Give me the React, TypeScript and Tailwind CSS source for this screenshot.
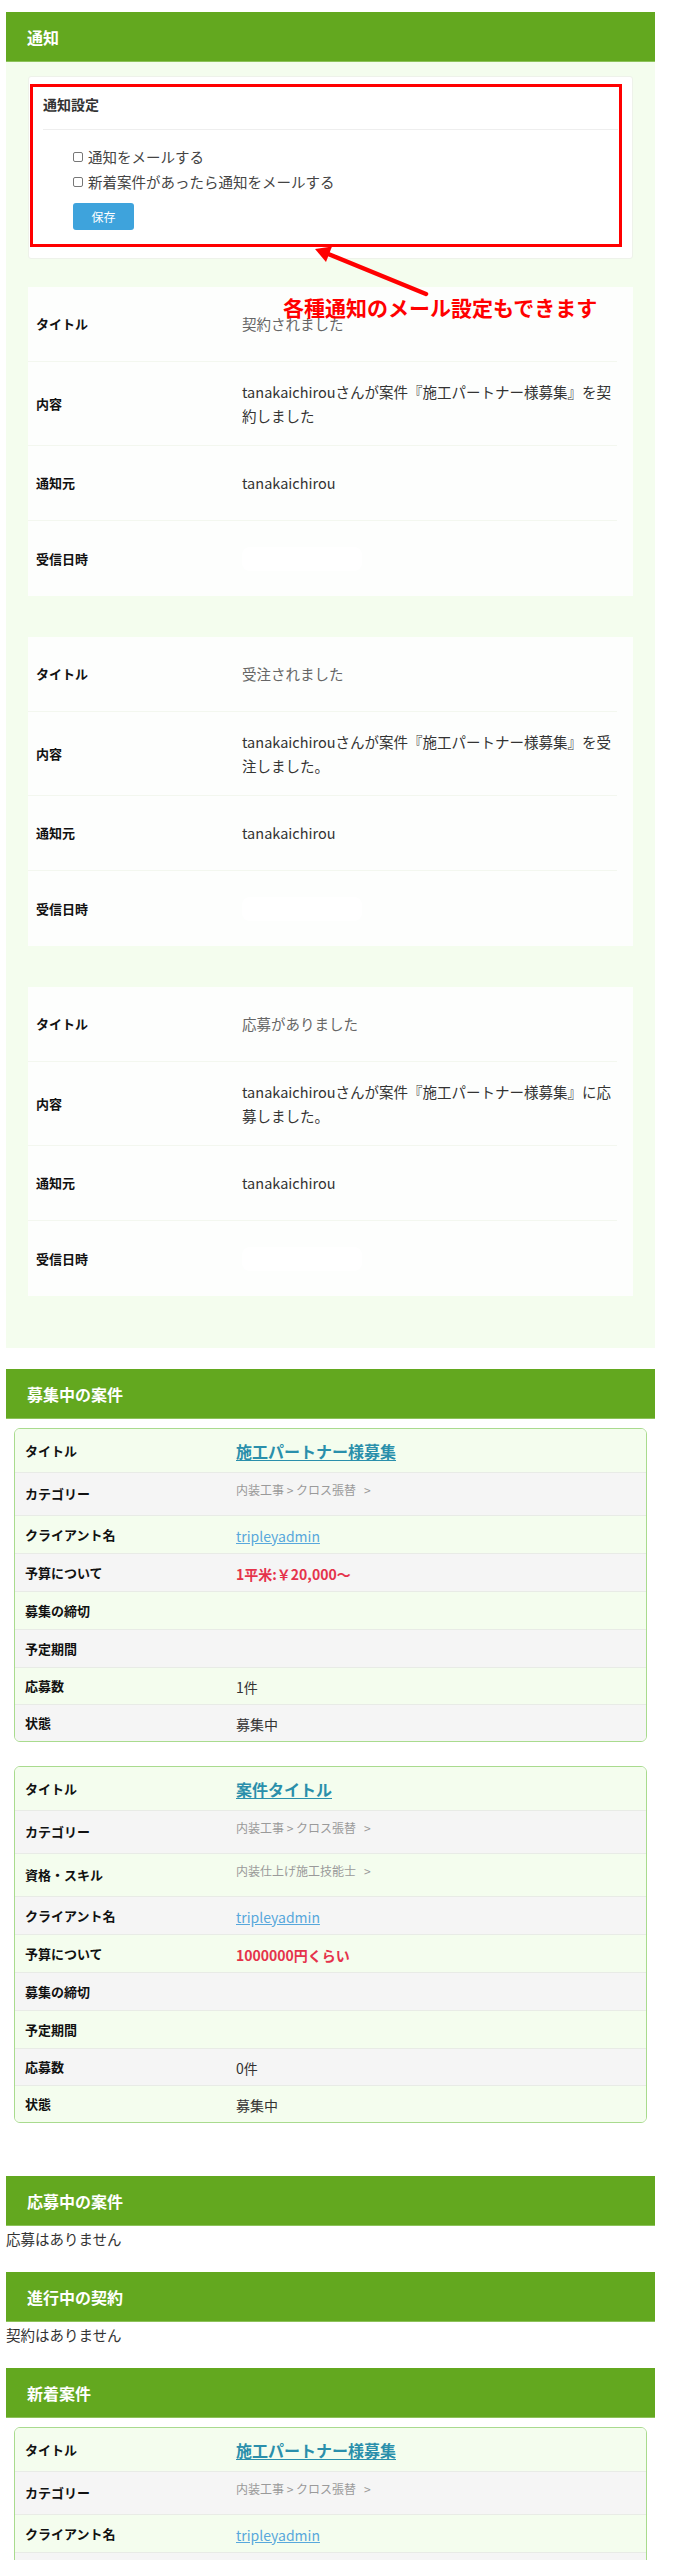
import React from 'react';

const font = { fontFamily: '"Noto Sans CJK JP", "Noto Sans", sans-serif' };

type Notice = { title: string; body: string; from: string };

const notices: Notice[] = [
    { title: '契約されました', body: 'tanakaichirouさんが案件『施工パートナー様募集』を契約しました', from: 'tanakaichirou' },
    { title: '受注されました', body: 'tanakaichirouさんが案件『施工パートナー様募集』を受注しました。', from: 'tanakaichirou' },
    { title: '応募がありました', body: 'tanakaichirouさんが案件『施工パートナー様募集』に応募しました。', from: 'tanakaichirou' },
];

type Job = {
    title: string;
    skill?: string;
    budget: string;
    count: string;
};

const openJobs: Job[] = [
    { title: '施工パートナー様募集', budget: '1平米:￥20,000〜', count: '1件' },
    { title: '案件タイトル', skill: '内装仕上げ施工技能士', budget: '1000000円くらい', count: '0件' },
];

function SectionHeader({ children }: { children: React.ReactNode }) {
    return (
        <div className="h-[50px] bg-[#63a81f] flex items-center px-[21px] text-white font-bold text-[16px] border-b border-[#8cc25a]">
            {children}
        </div>
    );
}

function NoticeCard({ n }: { n: Notice }) {
    const label = 'w-[214px] shrink-0 pl-[8px] text-[13px] font-bold text-[#111]';
    return (
        <div className="bg-[#fdfefd] pr-[16px]">
            <div className="h-[75px] flex items-center border-b border-[#f3f7ef]">
                <div className={label}>タイトル</div>
                <div className="text-[14.5px] text-[#666]">{n.title}</div>
            </div>
            <div className="h-[84px] flex items-center border-b border-[#f3f7ef]">
                <div className={label}>内容</div>
                <div className="flex-1 text-[14.5px] leading-[24px] text-[#333]">{n.body}</div>
            </div>
            <div className="h-[75px] flex items-center border-b border-[#f3f7ef]">
                <div className={label}>通知元</div>
                <div className="text-[14.5px] text-[#333]">{n.from}</div>
            </div>
            <div className="h-[75px] flex items-center">
                <div className={label}>受信日時</div>
                <div className="w-[120px] h-[24px] rounded-[8px] bg-white" />
            </div>
        </div>
    );
}

function JobRow({ label, children, green, h, last }: { label: string; children?: React.ReactNode; green: boolean; h: string; last?: boolean }) {
    return (
        <div className={`${h} flex items-center ${green ? 'bg-[#f4fdee]' : 'bg-[#f5f5f5]'} ${last ? '' : 'border-b border-[#e8ebe6]'}`}>
            <div className="w-[221px] shrink-0 pl-[10px] text-[13px] font-bold text-[#111]">{label}</div>
            <div className="flex-1">{children}</div>
        </div>
    );
}

function Crumb({ items }: { items: string[] }) {
    return (
        <div className="-mt-[8px] text-[12px] text-[#9a9a9a]">
            {items.join(' > ')}
            <span className="ml-[8px]">&gt;</span>
        </div>
    );
}

function JobCard({ job }: { job: Job }) {
    const rows: { label: string; h: string; node?: React.ReactNode }[] = [
        {
            label: 'タイトル',
            h: 'h-[44px]',
            node: <span className="text-[16px] font-bold text-[#2a8fab] underline underline-offset-2">{job.title}</span>,
        },
        { label: 'カテゴリー', h: 'h-[43px]', node: <Crumb items={['内装工事', 'クロス張替']} /> },
    ];
    if (job.skill) rows.push({ label: '資格・スキル', h: 'h-[43px]', node: <div className="-mt-[8px] text-[12px] text-[#9a9a9a]">{job.skill}<span className="ml-[8px]">&gt;</span></div> });
    rows.push(
        { label: 'クライアント名', h: 'h-[38px]', node: <span className="text-[14px] text-[#58a8dc] underline">tripleyadmin</span> },
        { label: '予算について', h: 'h-[38px]', node: <span className="text-[14px] font-bold text-[#e5334b]">{job.budget}</span> },
        { label: '募集の締切', h: 'h-[38px]' },
        { label: '予定期間', h: 'h-[38px]' },
        { label: '応募数', h: 'h-[37px]', node: <span className="text-[14px] text-[#333]">{job.count}</span> },
        { label: '状態', h: 'h-[36px]', node: <span className="text-[14px] text-[#333]">募集中</span> },
    );
    return (
        <div className="mx-[8px] border border-[#a9db8e] rounded-[6px] overflow-hidden">
            {rows.map((r, i) => (
                <JobRow key={r.label} label={r.label} green={i % 2 === 0} h={r.h} last={i === rows.length - 1}>
                    {r.node}
                </JobRow>
            ))}
        </div>
    );
}

export default function App() {
    return (
        <div className="bg-white pl-[6px] pr-[22px] pt-[12px] pb-[40px] text-[#333]" style={font}>
            <SectionHeader>通知</SectionHeader>
            <div className="bg-[#f4fdee] px-[22px] pt-[14px] pb-[52px]">
                {/* settings card + annotation */}
                <div className="relative bg-white rounded-[3px] border border-[#eef2ea] px-[14px] pt-[16px] pb-[28px]">
                    <div className="text-[14px] font-bold text-[#333] leading-[22px] pb-[14px] border-b border-[#eeeeee]">通知設定</div>
                    <div className="pl-[30px] pt-[14px]">
                        <label className="flex items-center gap-[5px] h-[25px] text-[14.5px] text-[#444]">
                            <span className="w-[10px] h-[10px] border border-[#777] rounded-[2px] bg-white" />
                            通知をメールする
                        </label>
                        <label className="flex items-center gap-[5px] h-[25px] text-[14.5px] text-[#444]">
                            <span className="w-[10px] h-[10px] border border-[#777] rounded-[2px] bg-white" />
                            新着案件があったら通知をメールする
                        </label>
                        <button className="mt-[9px] w-[61px] h-[27px] rounded-[3px] bg-[#3ea3dc] text-white text-[12px]">保存</button>
                    </div>
                    <div className="absolute left-[1px] top-[7px] right-[10px] bottom-[11px] border-[3px] border-[#ff0000] pointer-events-none" />
                    <svg className="absolute left-[270px] top-[160px] z-10" width="150" height="70" viewBox="0 0 150 70">
                        <line x1="127" y1="57" x2="28" y2="16.5" stroke="#ff0000" strokeWidth="4.5" strokeLinecap="round" />
                        <polygon points="16,12 33,9.5 27,25" fill="#ff0000" />
                    </svg>
                    <div className="absolute left-[254px] top-[215px] z-10 text-[21px] leading-[30px] font-bold text-[#ff0000] whitespace-nowrap">
                        各種通知のメール設定もできます
                    </div>
                </div>
                <div className="mt-[28px] flex flex-col gap-[41px]">
                    {notices.map((n, i) => (
                        <NoticeCard key={i} n={n} />
                    ))}
                </div>
            </div>

            <div className="mt-[21px]">
                <SectionHeader>募集中の案件</SectionHeader>
                <div className="mt-[9px] flex flex-col gap-[24px]">
                    {openJobs.map((j, i) => (
                        <JobCard key={i} job={j} />
                    ))}
                </div>
            </div>

            <div className="mt-[53px]">
                <SectionHeader>応募中の案件</SectionHeader>
                <p className="text-[14.5px] leading-[26px] text-[#333]">応募はありません</p>
            </div>

            <div className="mt-[20px]">
                <SectionHeader>進行中の契約</SectionHeader>
                <p className="text-[14.5px] leading-[26px] text-[#333]">契約はありません</p>
            </div>

            <div className="mt-[20px]">
                <SectionHeader>新着案件</SectionHeader>
                <div className="mt-[9px] flex flex-col gap-[24px]">
                    <JobCard job={openJobs[0]} />
                </div>
            </div>
        </div>
    );
}
